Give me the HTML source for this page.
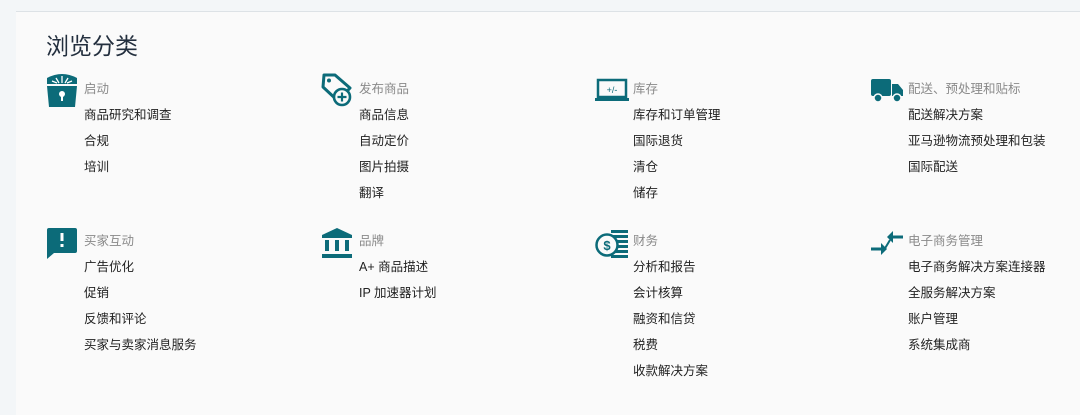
<!DOCTYPE html>
<html><head><meta charset="utf-8"><style>
*{margin:0;padding:0;box-sizing:border-box}
body{width:1080px;height:415px;background:#f3f6f8;font-family:"Liberation Sans","Noto Sans CJK SC",sans-serif;position:relative;overflow:hidden}
.panel{position:absolute;left:16px;top:11px;width:1064px;height:404px;background:#fafafa;border-top:1px solid #dde2e6}
h1{position:absolute;left:46px;top:27px;font-size:23px;font-weight:normal;color:#232f3e}
.col{position:absolute;top:-2px}
.hd{position:absolute;left:38px;font-size:12.5px;color:#8a8a8a;white-space:nowrap}
.it{position:absolute;left:38px;font-size:12.5px;color:#222;white-space:nowrap}
svg{position:absolute}
</style></head><body>
<div class="panel"></div>
<h1>浏览分类</h1>

<div class="col" style="left:46px">
<svg style="left:0;top:74px" width="32" height="36" viewBox="0 0 32 36"><path d="M1 6 Q16 -2 31 6 L31 12 L1 12Z" fill="#0c6b79"/><path d="M16 4 L16 11 M10 6 L13 11 M22 6 L19 11 M6 9 L11 11 M26 9 L21 11" stroke="#fff" stroke-width="1.3"/><path d="M1 14 H31 L29 35 H3Z" fill="#0c6b79"/><circle cx="16" cy="22" r="3" fill="#fff"/><rect x="15" y="23" width="2" height="6" fill="#fff"/></svg>
<div class="hd" style="top:80px">启动</div>
<div class="it" style="top:106px">商品研究和调查</div>
<div class="it" style="top:132px">合规</div>
<div class="it" style="top:158px">培训</div>
<svg style="left:0;top:228px" width="32" height="34" viewBox="0 0 32 34"><path d="M3 2 H29 Q31 2 31 4 V25 Q31 27 29 27 H8 L1 33 V4 Q1 2 3 2Z" fill="#0c6b79"/><rect x="14.5" y="7" width="3" height="8" fill="#fff"/><rect x="14.5" y="18" width="3" height="3" fill="#fff"/></svg>
<div class="hd" style="top:232px">买家互动</div>
<div class="it" style="top:258px">广告优化</div>
<div class="it" style="top:284px">促销</div>
<div class="it" style="top:310px">反馈和评论</div>
<div class="it" style="top:336px">买家与卖家消息服务</div>
</div>

<div class="col" style="left:321px">
<svg style="left:0;top:75px" width="34" height="34" viewBox="0 0 34 34"><path d="M3 2 H14 L29 15 L17 28 L2 14 Z" fill="none" stroke="#0c6b79" stroke-width="3" stroke-linejoin="round"/><circle cx="8" cy="7.5" r="2" fill="#0c6b79"/><circle cx="21" cy="24" r="8" fill="#fafafa" stroke="#0c6b79" stroke-width="2.6"/><path d="M21 19.5 V28.5 M16.5 24 H25.5" stroke="#0c6b79" stroke-width="2.2"/></svg>
<div class="hd" style="top:80px">发布商品</div>
<div class="it" style="top:106px">商品信息</div>
<div class="it" style="top:132px">自动定价</div>
<div class="it" style="top:158px">图片拍摄</div>
<div class="it" style="top:184px">翻译</div>
<svg style="left:0;top:229px" width="32" height="32" viewBox="0 0 32 32"><path d="M16 1 L31 8 H1Z" fill="#0c6b79"/><rect x="1" y="8" width="30" height="3" fill="#0c6b79"/><rect x="4" y="13" width="4" height="11" fill="#0c6b79"/><rect x="14" y="13" width="4" height="11" fill="#0c6b79"/><rect x="24" y="13" width="4" height="11" fill="#0c6b79"/><rect x="1" y="27" width="30" height="4" fill="#0c6b79"/></svg>
<div class="hd" style="top:232px">品牌</div>
<div class="it" style="top:258px">A+ 商品描述</div>
<div class="it" style="top:284px">IP 加速器计划</div>
</div>

<div class="col" style="left:595px">
<svg style="left:0;top:80px" width="34" height="24" viewBox="0 0 34 24"><rect x="3" y="2" width="28" height="17" fill="none" stroke="#0c6b79" stroke-width="2.5"/><rect x="0" y="20" width="34" height="3" fill="#0c6b79"/><text x="17" y="15" font-size="9" fill="#0c6b79" text-anchor="middle" font-family="Liberation Sans">+/-</text></svg>
<div class="hd" style="top:80px">库存</div>
<div class="it" style="top:106px">库存和订单管理</div>
<div class="it" style="top:132px">国际退货</div>
<div class="it" style="top:158px">清仓</div>
<div class="it" style="top:184px">储存</div>
<svg style="left:0;top:231px" width="34" height="30" viewBox="0 0 34 30"><rect x="16" y="1" width="17" height="3" fill="#0c6b79"/><rect x="18" y="6" width="15" height="3" fill="#0c6b79"/><rect x="18" y="11" width="15" height="3" fill="#0c6b79"/><rect x="18" y="16" width="15" height="3" fill="#0c6b79"/><rect x="18" y="21" width="15" height="3" fill="#0c6b79"/><rect x="16" y="26" width="17" height="3" fill="#0c6b79"/><circle cx="12" cy="16" r="10.5" fill="#fafafa" stroke="#0c6b79" stroke-width="2.5"/><text x="12" y="21" font-size="13" font-weight="bold" fill="#0c6b79" text-anchor="middle" font-family="Liberation Sans">$</text></svg>
<div class="hd" style="top:232px">财务</div>
<div class="it" style="top:258px">分析和报告</div>
<div class="it" style="top:284px">会计核算</div>
<div class="it" style="top:310px">融资和信贷</div>
<div class="it" style="top:336px">税费</div>
<div class="it" style="top:362px">收款解决方案</div>
</div>

<div class="col" style="left:870px">
<svg style="left:0;top:80px" width="34" height="26" viewBox="0 0 34 26"><rect x="1" y="1" width="20" height="17" rx="2" fill="#0c6b79"/><path d="M22 6 H28 L33 12 V18 H22Z" fill="#0c6b79"/><circle cx="8" cy="20" r="4" fill="#0c6b79" stroke="#fafafa" stroke-width="1.5"/><circle cx="27" cy="20" r="4" fill="#0c6b79" stroke="#fafafa" stroke-width="1.5"/></svg>
<div class="hd" style="top:80px">配送、预处理和贴标</div>
<div class="it" style="top:106px">配送解决方案</div>
<div class="it" style="top:132px">亚马逊物流预处理和包装</div>
<div class="it" style="top:158px">国际配送</div>
<svg style="left:0;top:232px" width="34" height="26" viewBox="0 0 34 26"><path d="M33 7 H20" stroke="#0c6b79" stroke-width="3"/><path d="M17 7 L23 1 V13Z" fill="#0c6b79"/><path d="M1 19 H13" stroke="#0c6b79" stroke-width="3"/><path d="M17 19 L11 13 V25Z" fill="#0c6b79"/><path d="M14 20 L20 10" stroke="#0c6b79" stroke-width="2"/></svg>
<div class="hd" style="top:232px">电子商务管理</div>
<div class="it" style="top:258px">电子商务解决方案连接器</div>
<div class="it" style="top:284px">全服务解决方案</div>
<div class="it" style="top:310px">账户管理</div>
<div class="it" style="top:336px">系统集成商</div>
</div>
</body></html>
